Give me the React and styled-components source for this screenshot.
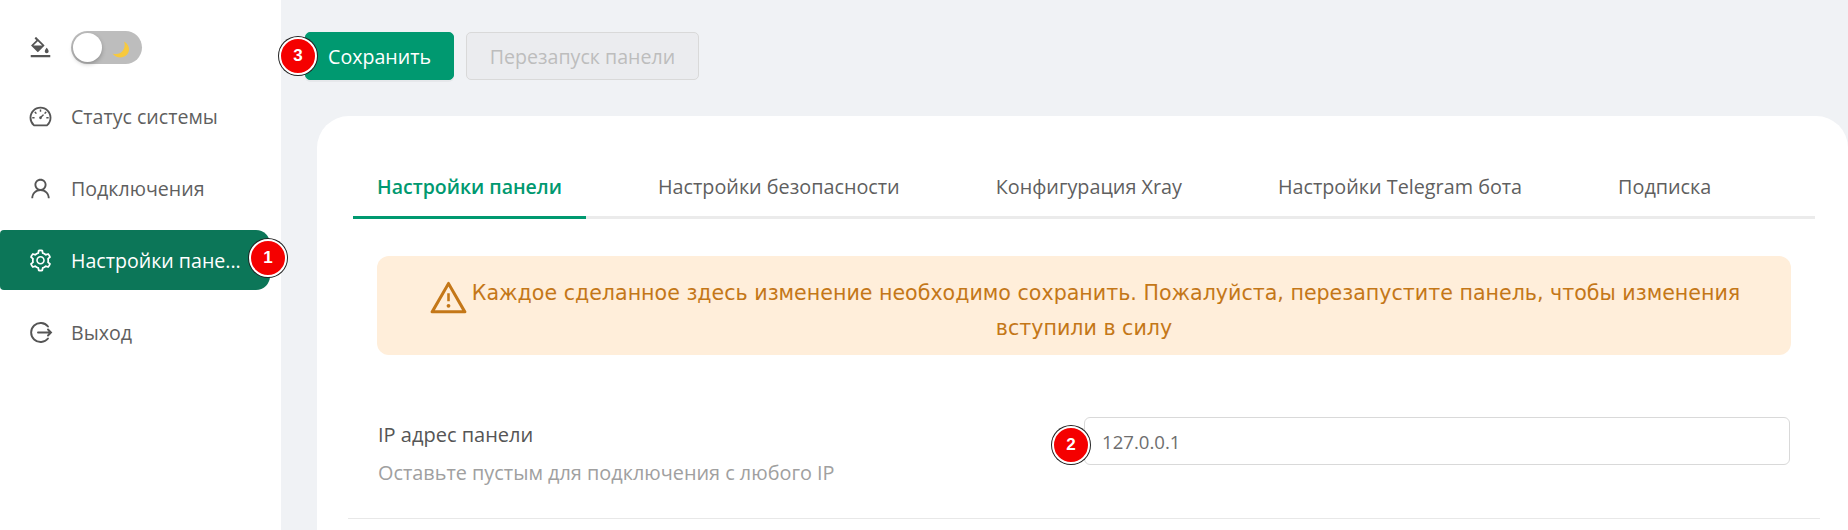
import React from 'react';
import styled, { createGlobalStyle } from 'styled-components';
import {
  AiOutlineBgColors,
  AiOutlineDashboard,
  AiOutlineUser,
  AiOutlineSetting,
  AiOutlineWarning,
} from 'react-icons/ai';

const GlobalStyle = createGlobalStyle`
  html, body {
    margin: 0;
    height: 530px;
    overflow: hidden;
    background: #f0f2f5;
    font-family: "Open Sans", "Noto Sans", sans-serif;
  }
  * { box-sizing: border-box; }
`;

const Page = styled.div`
  display: flex;
  width: 1848px;
  height: 530px;
  overflow: hidden;
`;

const Sidebar = styled.aside`
  flex: 0 0 281px;
  background: #fff;
  padding-top: 29px;
`;

const ThemeRow = styled.div`
  display: flex;
  align-items: center;
  height: 36px;
  padding-left: 28px;
  margin-bottom: 21px;
  color: #555;
  font-size: 25px;
`;

const Toggle = styled.div`
  position: relative;
  width: 71px;
  height: 33px;
  margin-left: 18px;
  border-radius: 17px;
  background: #bdbdbd;
`;

const Knob = styled.span`
  position: absolute;
  top: 2px;
  left: 2px;
  width: 29px;
  height: 29px;
  border-radius: 50%;
  background: #fff;
  box-shadow: 0 2px 4px rgba(0, 0, 0, 0.25);
`;

const Moon = styled.svg`
  position: absolute;
  top: 10px;
  right: 12px;
  width: 18px;
  height: 18px;
`;

const NavItem = styled.div`
  position: relative;
  display: flex;
  align-items: center;
  width: 270px;
  height: 60px;
  margin-bottom: 12px;
  padding-left: 28px;
  border-radius: 4px 14px 14px 4px;
  font-size: 19.6px;
  color: ${props => (props.active ? '#fff' : '#5f5f5f')};
  background: ${props => (props.active ? '#0c7658' : 'transparent')};
  svg { flex: none; font-size: 25px; color: ${props => (props.active ? '#fff' : '#555')}; }
`;

const NavLabel = styled.span`
  margin-left: 18px;
  white-space: nowrap;
`;

const Badge = styled.span`
  position: absolute;
  z-index: 2;
  display: flex;
  align-items: center;
  justify-content: center;
  width: 38px;
  height: 38px;
  border-radius: 50%;
  background: #f50000;
  border: 2px solid #fff;
  box-shadow: 0 0 0 1px #222;
  color: #fff;
  font-family: "Liberation Sans", sans-serif;
  font-size: 17px;
  font-weight: 700;
`;

const NavBadge = styled(Badge)`
  right: -17px;
  top: 9px;
`;

const SaveBadge = styled(Badge)`
  left: -27px;
  top: 4px;
`;

const InputBadge = styled(Badge)`
  left: -32px;
  top: 9px;
`;

const Main = styled.main`
  flex: 1;
  min-width: 0;
  padding: 32px 0 0 24px;
`;

const Toolbar = styled.div`
  display: flex;
  gap: 12px;
  margin-bottom: 36px;
`;

const Button = styled.button`
  position: relative;
  height: 48px;
  padding: 0;
  width: ${props => props.width}px;
  border-radius: 5px;
  font-family: inherit;
  font-size: 19.6px;
  border: 1px solid ${props => (props.primary ? '#009970' : '#d9d9d9')};
  color: ${props => (props.primary ? '#fff' : '#bdbdbd')};
  background: ${props => (props.primary ? '#009970' : '#ebecef')};
  box-shadow: ${props => (props.primary ? '0 2px 0 rgba(0, 0, 0, 0.04)' : 'none')};
`;

const Card = styled.section`
  height: 500px;
  margin-left: 12px;
  padding: 49px 33px 0 36px;
  background: #fff;
  border-radius: 32px;
`;

const Tabs = styled.div`
  display: flex;
  gap: 48px;
  border-bottom: 3px solid #ebebeb;
`;

const Tab = styled.div`
  height: 54px;
  padding: 0 24px;
  margin-bottom: -3px;
  font-size: ${props => (props.active ? '19.5px' : '19.8px')};
  line-height: 44px;
  white-space: nowrap;
  color: ${props => (props.active ? '#009970' : '#5f5f5f')};
  font-weight: ${props => (props.active ? 600 : 400)};
  border-bottom: 3px solid ${props => (props.active ? '#009970' : 'transparent')};
`;

const Notice = styled.div`
  margin: 37px 24px 0;
  padding: 20px 24px 9px;
  background: #ffeeda;
  border-radius: 12px;
  text-align: center;
  font-family: "DejaVu Sans", sans-serif;
  font-size: 20.6px;
  line-height: 35px;
  color: #c47718;
  svg { font-size: 41px; vertical-align: -6px; margin: -12px 3px -12px 0; }
`;

const SettingRow = styled.div`
  display: grid;
  grid-template-columns: 1fr 1fr;
  margin: 0 -5px;
  padding-top: 62px;
  height: 164px;
  border-bottom: 1px solid #e8e8e8;
`;

const SettingText = styled.div`
  padding-left: 30px;
`;

const SettingTitle = styled.div`
  margin-top: 4px;
  font-size: 20px;
  line-height: 28px;
  font-weight: 500;
  color: #555;
`;

const SettingHint = styled.div`
  margin-top: 10px;
  font-size: 19.85px;
  line-height: 28px;
  color: #a0a0a0;
`;

const InputWrap = styled.div`
  position: relative;
  height: 48px;
  margin-right: 30px;
`;

const TextInput = styled.input`
  width: 100%;
  height: 100%;
  padding: 0 17px;
  border: 1px solid #d9d9d9;
  border-radius: 6px;
  outline: none;
  font-family: inherit;
  font-size: 18.6px;
  color: #6e6e6e;
`;

function LogoutIcon() {
  return (
    <svg width="25" height="25" viewBox="0 0 25 25" fill="none" stroke="currentColor" strokeWidth="1.9" strokeLinecap="round">
      <path d="M20 6.5A9.5 9.5 0 1 0 20 18.5" />
      <path d="M10 12.5H23M20 9.5L23 12.5L20 15.5" />
    </svg>
  );
}

const tabs = [
  'Настройки панели',
  'Настройки безопасности',
  'Конфигурация Xray',
  'Настройки Telegram бота',
  'Подписка',
];

function App() {
  return (
    <Page>
      <GlobalStyle />
      <Sidebar>
        <ThemeRow>
          <AiOutlineBgColors />
          <Toggle>
            <Knob />
            <Moon viewBox="0 0 18 18">
              <path d="M12 0.5C17 3 18.5 9 15.5 13C12 17.5 4.5 18 0.5 12.5C5 14 9.5 12.5 11.5 8.5C13 5.5 13 3 12 0.5Z" fill="#f7c93e" />
            </Moon>
          </Toggle>
        </ThemeRow>
        <NavItem><AiOutlineDashboard /><NavLabel>Статус системы</NavLabel></NavItem>
        <NavItem><AiOutlineUser /><NavLabel>Подключения</NavLabel></NavItem>
        <NavItem active>
          <AiOutlineSetting />
          <NavLabel>Настройки пане...</NavLabel>
          <NavBadge>1</NavBadge>
        </NavItem>
        <NavItem><LogoutIcon /><NavLabel>Выход</NavLabel></NavItem>
      </Sidebar>
      <Main>
        <Toolbar>
          <Button primary width={149}>
            <SaveBadge>3</SaveBadge>
            Сохранить
          </Button>
          <Button disabled width={233}>Перезапуск панели</Button>
        </Toolbar>
        <Card>
          <Tabs>
            {tabs.map((tab, index) => (
              <Tab key={tab} active={index === 0}>{tab}</Tab>
            ))}
          </Tabs>
          <Notice>
            <AiOutlineWarning />
            Каждое сделанное здесь изменение необходимо сохранить. Пожалуйста, перезапустите панель, чтобы изменения вступили в силу
          </Notice>
          <SettingRow>
            <SettingText>
              <SettingTitle>IP адрес панели</SettingTitle>
              <SettingHint>Оставьте пустым для подключения с любого IP</SettingHint>
            </SettingText>
            <InputWrap>
              <InputBadge>2</InputBadge>
              <TextInput defaultValue="127.0.0.1" />
            </InputWrap>
          </SettingRow>
        </Card>
      </Main>
    </Page>
  );
}

export default App;
